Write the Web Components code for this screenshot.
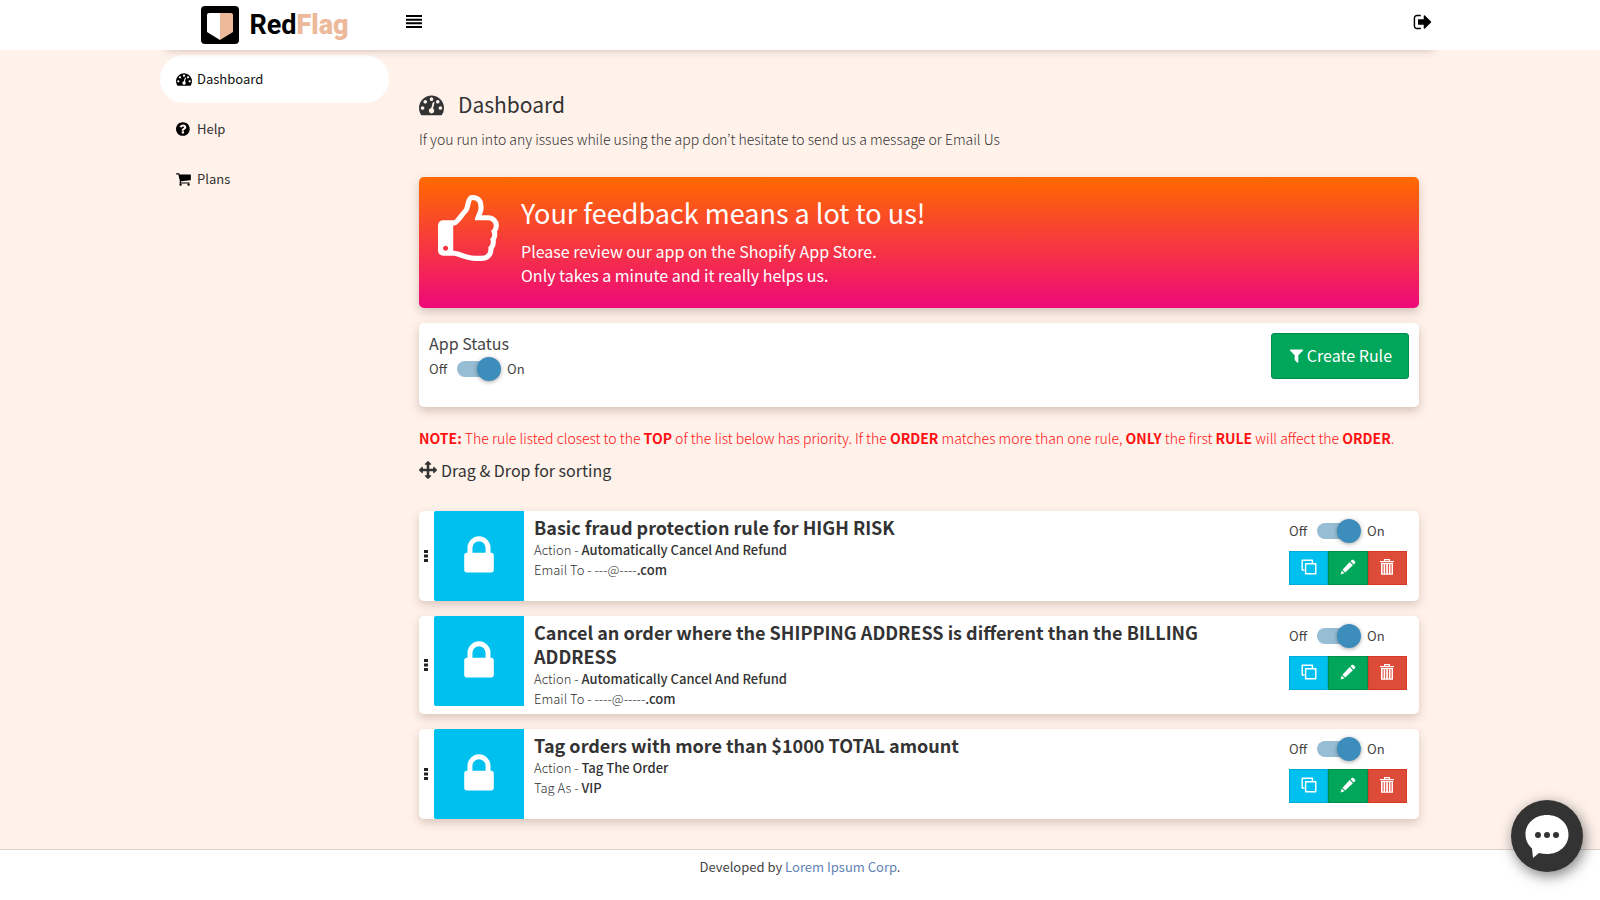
<!DOCTYPE html>
<html lang="en">
<head>
<meta charset="utf-8">
<meta name="viewport" content="width=device-width, initial-scale=1">
<title>RedFlag – Dashboard</title>
<style>
body{margin:0;background:#fff;font-family:"Noto Sans CJK KR","Open Sans",sans-serif;font-size:13px;line-height:20px;color:#333}
</style>
</head>
<body>
<rf-app></rf-app>
<script>
const ICONS = {
  gauge: ['0 0 1792 1792', '<path d="M384 1152q0-53-37.5-90.5t-90.5-37.5-90.5 37.5-37.5 90.5 37.5 90.5 90.5 37.5 90.5-37.5 37.5-90.5zm192-448q0-53-37.5-90.5t-90.5-37.5-90.5 37.5-37.5 90.5 37.5 90.5 90.5 37.5 90.5-37.5 37.5-90.5zm428 481l101-382q6-26-7.5-48.5t-38.5-29.5-48 6.5-30 39.5l-101 382q-60 5-107 43.5t-63 98.5q-20 77 20 146t117 89 146-20 89-117q16-60-6-117t-72-91zm660-33q0-53-37.5-90.5t-90.5-37.5-90.5 37.5-37.5 90.5 37.5 90.5 90.5 37.5 90.5-37.5 37.5-90.5zm-640-640q0-53-37.5-90.5t-90.5-37.5-90.5 37.5-37.5 90.5 37.5 90.5 90.5 37.5 90.5-37.5 37.5-90.5zm448 192q0-53-37.5-90.5t-90.5-37.5-90.5 37.5-37.5 90.5 37.5 90.5 90.5 37.5 90.5-37.5 37.5-90.5zm320 448q0 261-141 483-19 29-54 29h-1402q-35 0-54-29-141-221-141-483 0-182 71-348t191-286 286-191 348-71 348 71 286 191 191 286 71 348z"/>'],
  help: ['128 0 1792 1792', '<path d="M1024 1376v-192q0-14-9-23t-23-9h-192q-14 0-23 9t-9 23v192q0 14 9 23t23 9h192q14 0 23-9t9-23zm256-672q0-88-55.5-163t-138.5-116-170-41q-243 0-371 213-15 24 8 42l132 100q7 6 19 6 16 0 25-12 53-68 86-92 34-24 86-24 48 0 85.5 26t37.5 59q0 38-20 61t-68 45q-63 28-115.5 86.5t-52.5 125.5v36q0 14 9 23t23 9h192q14 0 23-9t9-23q0-19 21.5-49.5t54.5-49.5q32-18 49-28.5t46-35 44.5-48 28-60.5 12.5-81zm384 192q0 209-103 385.5t-279.5 279.5-385.5 103-385.5-103-279.5-279.5-103-385.5 103-385.5 279.5-279.5 385.5-103 385.5 103 279.5 279.5 103 385.5z"/>'],
  cart: ['64 0 1792 1792', '<path d="M704 1536q0 52-38 90t-90 38-90-38-38-90 38-90 90-38 90 38 38 90zm896 0q0 52-38 90t-90 38-90-38-38-90 38-90 90-38 90 38 38 90zm128-1088v512q0 24-16.5 42.5t-40.5 21.5l-1044 122q13 60 13 70 0 16-24 64h920q26 0 45 19t19 45-19 45-45 19h-1024q-26 0-45-19t-19-45q0-11 8-31.5t16-36 21.5-40 15.5-29.5l-177-823h-204q-26 0-45-19t-19-45 19-45 45-19h256q16 0 28.5 6.5t19.5 15.5 13 24.5 8 26 5.5 29.5 4.5 26h1201q26 0 45 19t19 45z"/>'],
  bars: ['0 0 16 14', '<path d="M0 1h16v2H0zM0 4.700h16v2H0zM0 8.300h16v2H0zM0 12h16v2H0z"/>'],
  exit: ['0 0 1792 1792', '<path d="M704 1440q0 4 1 20t.5 26.500-3 23.500-10 19.500-20.500 6.500h-320q-119 0-203.500-84.500t-84.500-203.500v-704q0-119 84.500-203.500t203.500-84.500h320q13 0 22.500 9.500t9.500 22.500q0 4 1 20t.5 26.500-3 23.500-10 19.500-20.500 6.500h-320q-66 0-113 47t-47 113v704q0 66 47 113t113 47h312l11.500 1 11.500 3 8 5.500 7 9 2 13.500zm928-544q0 26-19 45l-544 544q-19 19-45 19t-45-19-19-45v-288h-448q-26 0-45-19t-19-45v-384q0-26 19-45t45-19h448v-288q0-26 19-45t45-19 45 19l544 544q19 19 19 45z"/>'],
  thumb: ['128 0 1792 1792', '<path d="M384 1344q0-26-19-45t-45-19-45 19-19 45 19 45 45 19 45-19 19-45zm1152-576q0-51-39-89.5t-89-38.5h-352q0-58 48-159.500t48-160.500q0-98-32-145t-128-47q-26 26-38 85t-30.500 125.500-59.500 109.500q-22 23-77 91-4 5-23 30t-31.500 41-34.500 42.500-40 44-38.500 35.500-40 27-35.500 9h-32v640h32q13 0 31.500 3t33 6.500 38 11 35 11.500 35.500 12.500 29 10.500q211 73 342 73h121q192 0 192-167 0-26-5-56 30-16 47.500-52.500t17.500-73.500-18-69q53-50 53-119 0-25-10-55.500t-25-47.500q32-1 53.500-47t21.500-81zm128-1q0 89-49 163 9 33 9 69 0 77-38 144 3 21 3 43 0 101-60 178 1 139-85 219.500t-227 80.500h-129q-96 0-189.500-22.500t-216.500-65.500q-116-40-138-40h-288q-53 0-90.500-37.500t-37.500-90.500v-640q0-53 37.500-90.500t90.500-37.500h274q36-24 137-155 58-75 107-128 24-25 35.500-85.500t30.500-126.500 62-108q39-37 90-37 84 0 151 32.500t102 101.500 35 186q0 93-48 192h176q104 0 180 76t76 179z"/>'],
  filter: ['0 0 1792 1792', '<path d="M1595 295q17 41-14 70l-493 493v742q0 42-39 59-13 5-25 5-27 0-45-19l-256-256q-19-19-19-45v-486l-493-493q-31-29-14-70 17-39 59-39h1280q42 0 59 39z"/>'],
  move: ['0 0 1792 1792', '<path d="M1792 896q0 26-19 45l-256 256q-19 19-45 19t-45-19-19-45v-128h-384v384h128q26 0 45 19t19 45-19 45l-256 256q-19 19-45 19t-45-19l-256-256q-19-19-19-45t19-45 45-19h128v-384h-384v128q0 26-19 45t-45 19-45-19l-256-256q-19-19-19-45t19-45l256-256q19-19 45-19t45 19 19 45v128h384v-384h-128q-26 0-45-19t-19-45 19-45l256-256q19-19 45-19t45 19l256 256q19 19 19 45t-19 45-45 19h-128v384h384v-128q0-26 19-45t45-19 45 19l256 256q19 19 19 45z"/>'],
  lock: ['0 0 1792 1792', '<path d="M640 768h512v-192q0-106-75-181t-181-75-181 75-75 181v192zm832 96v576q0 40-28 68t-68 28h-960q-40 0-68-28t-28-68v-576q0-40 28-68t68-28h32v-192q0-184 132-316t316-132 316 132 132 316v192h32q40 0 68 28t28 68z"/>'],
  grip: ['0 0 4 12', '<path d="M0 0h4v3H0zM0 4.500h4v3H0zM0 9h4v3H0z"/>'],
  copy: ['0 0 16 16', '<path fill="none" stroke="currentColor" stroke-width="1.400" stroke-linejoin="round" d="M3.500 11H1.200V1.300h10.200V4M4.600 4.700h10.200v10H4.600z"/>'],
  pencil: ['0 0 16 16', '<path d="M12 .800 13.200.700 15.300 2.800 15.200 4 13.700 5.500 10.500 2.300zM9.700 3.100l3.200 3.200-7.700 7.200-2.700-2.700zM1.900 11.600l2.600 2.600L.500 15.500z"/>'],
  trash: ['0 0 14 16', '<path d="M4 0h6v2h4v1.300H0V2h4zM5.200 1.200V2h3.600v-.800zM1 4h12v11.700H1zM2.600 5v9.500h1V5zM5.200 5v9.500h1V5zM7.900 5v9.500h1V5zM10.500 5v9.500h1V5z" fill-rule="evenodd"/>'],
  shield: ['0 0 38 38', '<rect width="38" height="38" rx="4" fill="#000"/><path d="M8 7h11v27L6 26V9q0-2 2-2z" fill="#fff"/><path d="M19 7h11q2 0 2 2v17l-13 8z" fill="#ecb99b"/>'],
  chat: ['0 0 44 44', '<path fill="#fff" d="M22 1c12.500 0 21.500 8.500 21.500 19.500S34.500 40 22 40q-4 0-8-1l-6 5-1-9.500C3 31 .5 26 .5 20.500.5 9.500 9.500 1 22 1z"/><g fill="#333"><circle cx="13" cy="21" r="3"/><circle cx="22" cy="21" r="3"/><circle cx="31" cy="21" r="3"/></g>']
};

function define(name, html, setup) {
  const t = document.createElement('template');
  t.innerHTML = html;
  customElements.define(name, class extends HTMLElement {
    connectedCallback() {
      if (this.shadowRoot) return;
      this.attachShadow({ mode: 'open' }).append(t.content.cloneNode(true));
      if (setup) setup(this, this.shadowRoot);
    }
  });
}

define('rf-icon', `<style>:host{display:inline-block;flex:none;width:16px;height:16px}svg{display:block;width:100%;height:100%;fill:currentColor}</style>`, (el, root) => {
  const [box, body] = ICONS[el.getAttribute('name')];
  root.innerHTML += `<svg viewBox="${box}" aria-hidden="true">${body}</svg>`;
});

define('rf-header', `<style>
:host{display:block;position:relative;z-index:1;background:#fff}
header{display:flex;align-items:center;height:50px;max-width:1280px;margin:0 auto;box-shadow:0 7px 8px -7px rgba(90,50,30,.3);clip-path:inset(0 0 -16px 0)}
.brand{display:flex;align-items:center;justify-content:center;gap:10px;width:230px;height:48px;font:bold 27px/48px Roboto,sans-serif;color:#000;text-decoration:none}
.brand rf-icon{width:38px;height:38px}
.brand b{color:#ecb99b}
button{display:flex;align-items:center;align-self:flex-start;border:0;background:none;color:#000}
.menu{padding:0 16px;height:42px}
.menu rf-icon{height:14px}
.exit{margin:0 0 0 auto;padding:0 7px;height:44px}
.exit rf-icon{width:20px;height:20px}
</style>
<header><a class="brand" href="#"><rf-icon name="shield"></rf-icon><span>Red<b>Flag</b></span></a>
<button class="menu" aria-label="Toggle menu"><rf-icon name="bars"></rf-icon></button>
<button class="exit" aria-label="Log out"><rf-icon name="exit"></rf-icon></button></header>`);

define('rf-nav-item', `<style>
:host{display:block}
a{display:flex;align-items:center;gap:5px;height:48px;padding:0 16px;border-radius:24px;color:#333;text-decoration:none}
:host([active]) a{background:#fff;color:#111}
::slotted(rf-icon){width:16px;height:16px;color:#000}
</style><a href="#"><slot name="icon"></slot><slot></slot></a>`);

define('rf-toggle', `<style>
:host{display:block}
label{display:flex;align-items:center;height:24px;color:#444}
input{appearance:none;position:relative;width:40px;height:16px;margin:0 10px;border-radius:8px;background:#97bdd4;flex:none}
input::after{content:"";position:absolute;left:20px;top:-4px;width:24px;height:24px;border-radius:50%;background:#3c8dbc;box-shadow:0 1px 4px rgba(0,0,0,.35)}
input:not(:checked)::after{left:-4px}
</style><label><span>Off</span><input type="checkbox" role="switch" checked><span>On</span></label>`);

define('rf-banner', `<style>
:host{display:flex;gap:12px;min-height:131px;box-sizing:border-box;padding:18px 19px;border-radius:5px;color:#fff;background:linear-gradient(#ff6a00,#ee0979);box-shadow:0 4px 10px rgba(90,50,30,.25)}
rf-icon{width:71px;height:71px}
h2{margin:0;font-weight:400;font-size:27px;line-height:36px}
p{margin:8px 0 0;font-size:16px;line-height:24px;font-weight:400}
</style><rf-icon name="thumb"></rf-icon><div><h2><slot name="title"></slot></h2><p><slot></slot></p></div>`);

define('rf-status', `<style>
:host{display:flex;justify-content:space-between;align-items:flex-start;min-height:84px;box-sizing:border-box;margin-top:15px;padding:10px;border-radius:5px;background:#fff;box-shadow:0 4px 10px rgba(90,50,30,.25)}
h3{margin:0 0 4px;font-weight:400;font-size:16px;line-height:20px;color:#444}
button{display:flex;align-items:center;gap:2px;height:46px;padding:0 16px 2px;border:1px solid #008d4c;border-radius:3px;background:#00a65a;color:#fff;font:inherit;font-size:16px}
button rf-icon{width:17px;height:17px}
</style><div><h3>App Status</h3><rf-toggle></rf-toggle></div><button><rf-icon name="filter"></rf-icon>Create Rule</button>`);

define('rf-rule', `<style>
:host{display:flex;min-height:90px;border-radius:5px;background:#fff;box-shadow:0 4px 10px rgba(90,50,30,.22)}
.grip{display:flex;align-items:center;width:15px;box-sizing:border-box;padding-left:5px;color:#222}
.grip rf-icon{width:4px;height:12px}
.pic{display:flex;align-items:center;justify-content:center;width:90px;height:90px;flex:none;border-radius:2px 0 0 2px;background:#00c0ef;color:#fff}
.pic rf-icon{width:46px;height:46px}
.text{flex:1;padding:4px 10px 5px;font-size:13px;font-weight:300;line-height:20px;min-width:0;--strong:500}
h4{margin:0 0 1px;font-size:18px;line-height:24px;font-weight:700;max-width:680px}
.side{width:118px;padding:8px 12px 0 0;flex:none}
.btns{display:flex;margin-top:8px}
button{display:flex;flex:1;align-items:center;justify-content:center;height:34px;padding:0 0 2px;border:1px solid #00acd6;background:#00c0ef;color:#fff}
button:nth-child(2){border-color:#008d4c;background:#00a65a}
button:nth-child(3){border-color:#d73925;background:#dd4b39}
</style>
<div class="grip"><rf-icon name="grip"></rf-icon></div>
<div class="pic"><rf-icon name="lock"></rf-icon></div>
<div class="text"><h4><slot name="title"></slot></h4><slot></slot></div>
<div class="side"><rf-toggle></rf-toggle><div class="btns"><button aria-label="Duplicate"><rf-icon name="copy"></rf-icon></button><button aria-label="Edit"><rf-icon name="pencil"></rf-icon></button><button aria-label="Delete"><rf-icon name="trash"></rf-icon></button></div></div>`);

define('rf-chat', `<style>
:host{position:fixed;right:17px;bottom:28px}
button{display:flex;align-items:center;justify-content:center;width:72px;height:72px;padding:0;border:0;border-radius:50%;background:#333;box-shadow:2px 4px 14px rgba(0,0,0,.5)}
rf-icon{width:44px;height:44px}
</style><button aria-label="Open chat"><rf-icon name="chat"></rf-icon></button>`);

define('rf-app', `<style>
:host{display:flex;flex-direction:column;min-height:100vh}
.wrap{background:#fff2eb}
.cols{display:flex;max-width:1280px;margin:0 auto}
nav{display:flex;flex-direction:column;gap:2px;width:229px;padding-top:5px;box-sizing:border-box;flex:none}
main{flex:1;min-width:0;padding:40px 21px 30px 30px}
h1{display:flex;align-items:center;gap:14px;margin:0;font-weight:400;font-size:21px;line-height:28px}
h1 rf-icon{width:25px;height:25px}
.intro{margin:11px 0 28px;font-size:14px;font-weight:300}
.note{margin:21px 0 0;color:#f11;font-size:14px;font-weight:300}
.sort{display:flex;align-items:center;gap:4px;margin:10px 0 0;font-size:16px;line-height:24px}
.sort rf-icon{width:18px;height:18px}
.rules{display:flex;flex-direction:column;gap:15px;margin-top:29px}
p{margin:0}
b{font-weight:700}
rf-rule b{font-weight:500}
footer{flex:1;border-top:1px solid #d6d2d0;background:#fff;text-align:center;padding-top:7px;color:#444}
footer a{color:#5f83b5;text-decoration:none}
</style>
<rf-header></rf-header>
<div class="wrap"><div class="cols">
<nav><rf-nav-item active><rf-icon slot="icon" name="gauge"></rf-icon>Dashboard</rf-nav-item><rf-nav-item><rf-icon slot="icon" name="help"></rf-icon>Help</rf-nav-item><rf-nav-item><rf-icon slot="icon" name="cart"></rf-icon>Plans</rf-nav-item></nav>
<main>
<h1><rf-icon name="gauge"></rf-icon>Dashboard</h1>
<p class="intro">If you run into any issues while using the app don’t hesitate to send us a message or Email Us</p>
<rf-banner><span slot="title">Your feedback means a lot to us!</span>Please review our app on the Shopify App Store.<br>Only takes a minute and it really helps us.</rf-banner>
<rf-status></rf-status>
<p class="note"><b>NOTE:</b> The rule listed closest to the <b>TOP</b> of the list below has priority. If the <b>ORDER</b> matches more than one rule, <b>ONLY</b> the first <b>RULE</b> will affect the <b>ORDER</b>.</p>
<p class="sort"><rf-icon name="move"></rf-icon>Drag &amp; Drop for sorting</p>
<div class="rules">
<rf-rule><span slot="title">Basic fraud protection rule for HIGH RISK</span><p>Action - <b>Automatically Cancel And Refund</b></p><p>Email To - ---@----<b>.com</b></p></rf-rule>
<rf-rule><span slot="title">Cancel an order where the SHIPPING ADDRESS is different than the BILLING ADDRESS</span><p>Action - <b>Automatically Cancel And Refund</b></p><p>Email To - ----@-----<b>.com</b></p></rf-rule>
<rf-rule><span slot="title">Tag orders with more than $1000 TOTAL amount</span><p>Action - <b>Tag The Order</b></p><p>Tag As - <b>VIP</b></p></rf-rule>
</div>
</main></div></div>
<footer>Developed by <a href="#">Lorem Ipsum Corp</a>.</footer>
<rf-chat></rf-chat>`);
</script>
</body>
</html>
